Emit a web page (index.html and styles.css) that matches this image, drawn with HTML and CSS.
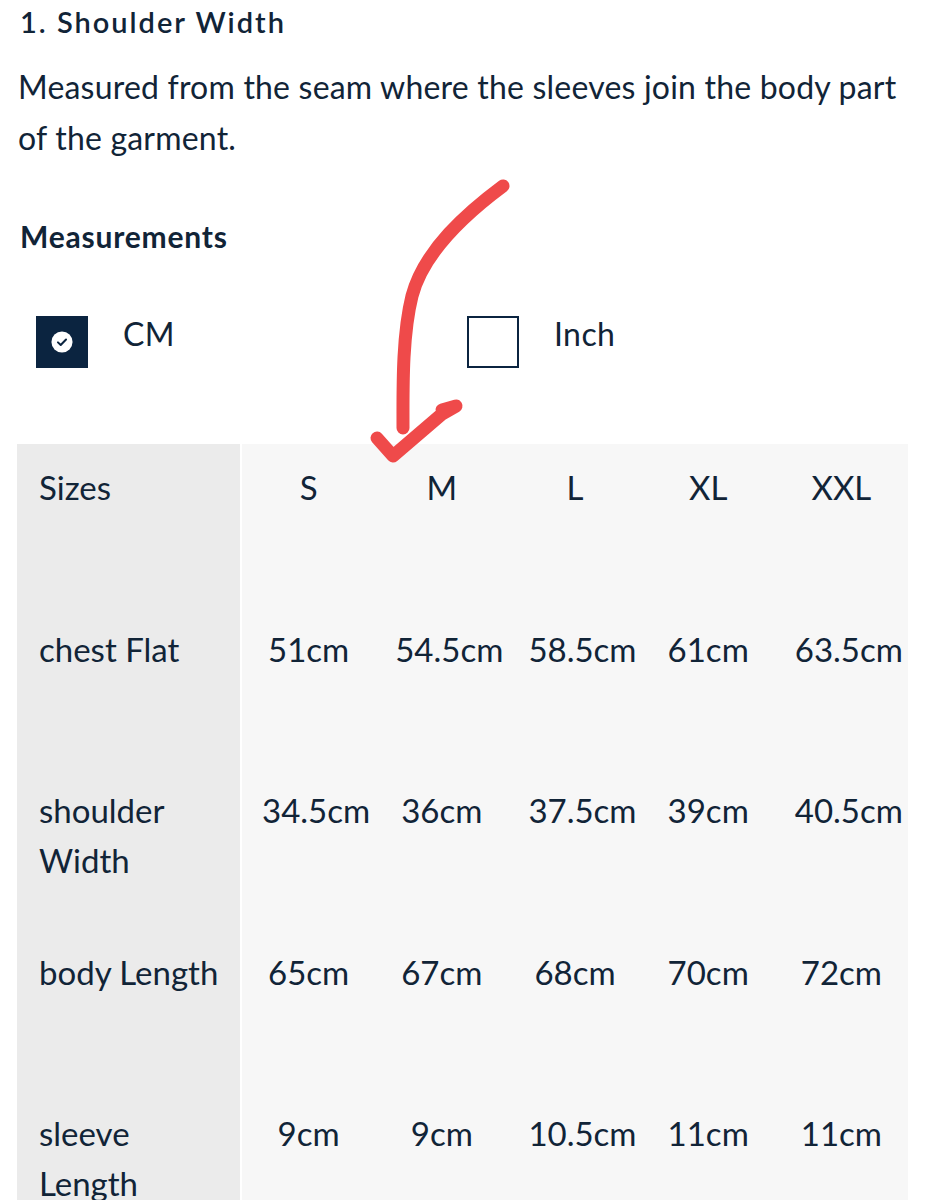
FILE: index.html
```html
<!DOCTYPE html>
<html lang="en">
<head>
<meta charset="utf-8">
<title>Size guide</title>
<link rel="stylesheet" href="styles.css">
</head>
<body>
<main class="page">
  <h3 class="title">1. Shoulder Width</h3>
  <p class="desc">Measured from the seam where the sleeves join the body part of the garment.</p>
  <h4 class="subtitle">Measurements</h4>
  <div class="units">
    <div class="unit unit-cm">
      <span class="box box-on">
        <svg viewBox="0 0 24 24" width="22" height="22" aria-hidden="true"><circle cx="12" cy="12" r="11.5" fill="#fff"/><path d="M7.6 12.4 L10.6 15.2 L16.4 9.3" fill="none" stroke="#0b2440" stroke-width="2.2" stroke-linecap="round" stroke-linejoin="round"/></svg>
      </span>
      <span class="unit-label">CM</span>
    </div>
    <div class="unit">
      <span class="box"></span>
      <span class="unit-label">Inch</span>
    </div>
  </div>
  <div class="sizes">
    <div class="head">Sizes</div><div class="cell">S</div><div class="cell">M</div><div class="cell">L</div><div class="cell">XL</div><div class="cell">XXL</div>
    <div class="head">chest Flat</div><div class="cell">51cm</div><div class="cell">54.5cm</div><div class="cell">58.5cm</div><div class="cell">61cm</div><div class="cell">63.5cm</div>
    <div class="head">shoulder Width</div><div class="cell">34.5cm</div><div class="cell">36cm</div><div class="cell">37.5cm</div><div class="cell">39cm</div><div class="cell">40.5cm</div>
    <div class="head">body Length</div><div class="cell">65cm</div><div class="cell">67cm</div><div class="cell">68cm</div><div class="cell">70cm</div><div class="cell">72cm</div>
    <div class="head">sleeve Length</div><div class="cell">9cm</div><div class="cell">9cm</div><div class="cell">10.5cm</div><div class="cell">11cm</div><div class="cell">11cm</div>
  </div>
</main>
<svg class="arrow" width="926" height="1200" viewBox="0 0 926 1200" aria-hidden="true">
  <path d="M503 186 C468 212 424 250 412 296 C402 336 403 390 403 428" />
  <path d="M377 438 L393 456 L442 414 L456 406 L442 410" />
</svg>
</body>
</html>
```
FILE: styles.css
```css
html, body {
  margin: 0;
  padding: 0;
  background: #fff;
}
body {
  font-family: Lato, "Open Sans", sans-serif;
  color: #112437;
  position: relative;
  height: 1200px;
  overflow: hidden;
}
.page {
  padding: 0 0 0 18px;
}
.title {
  margin: 0 0 0 2px;
  font-size: 29px;
  line-height: 44px;
  font-weight: 600;
  letter-spacing: 2px;
}
.desc {
  margin: 17px 0 0 0;
  width: 890px;
  font-size: 32px;
  line-height: 51px;
  font-weight: 400;
  letter-spacing: 0.2px;
}
.subtitle {
  margin: 51px 0 0 2px;
  font-size: 30px;
  line-height: 44px;
  font-weight: 700;
  letter-spacing: 0.8px;
}
.units {
  display: flex;
  margin-top: 58px;
  padding-left: 18px;
}
.unit {
  display: flex;
  align-items: flex-start;
}
.unit-cm {
  width: 431px;
}
.box {
  width: 52px;
  height: 52px;
  box-sizing: border-box;
  border: 2px solid #0b2440;
  display: flex;
  align-items: center;
  justify-content: center;
}
.box-on {
  background: #0b2440;
}
.unit-label {
  margin-left: 35px;
  margin-top: -2px;
  font-size: 32px;
  line-height: 40px;
  letter-spacing: 0.4px;
}
.sizes {
  margin-top: 76px;
  margin-left: -1px;
  width: 891px;
  display: grid;
  grid-template-columns: 225px repeat(5, minmax(0, 1fr));
  grid-auto-rows: 161.6px;
  background: #f7f7f7;
  font-size: 33px;
  line-height: 50px;
  letter-spacing: 0;
}
.head {
  background: #ebebeb;
  border-right: 2px solid #fff;
  padding: 18px 8px 0 22px;
}
.cell {
  padding: 18px 20px 0 20px;
  text-align: center;
  white-space: nowrap;
  min-width: 0;
}
.arrow {
  position: absolute;
  left: 0;
  top: 0;
  pointer-events: none;
}
.arrow path {
  fill: none;
  stroke: #ef4a4a;
  stroke-width: 13;
  stroke-linecap: round;
  stroke-linejoin: round;
}
```
